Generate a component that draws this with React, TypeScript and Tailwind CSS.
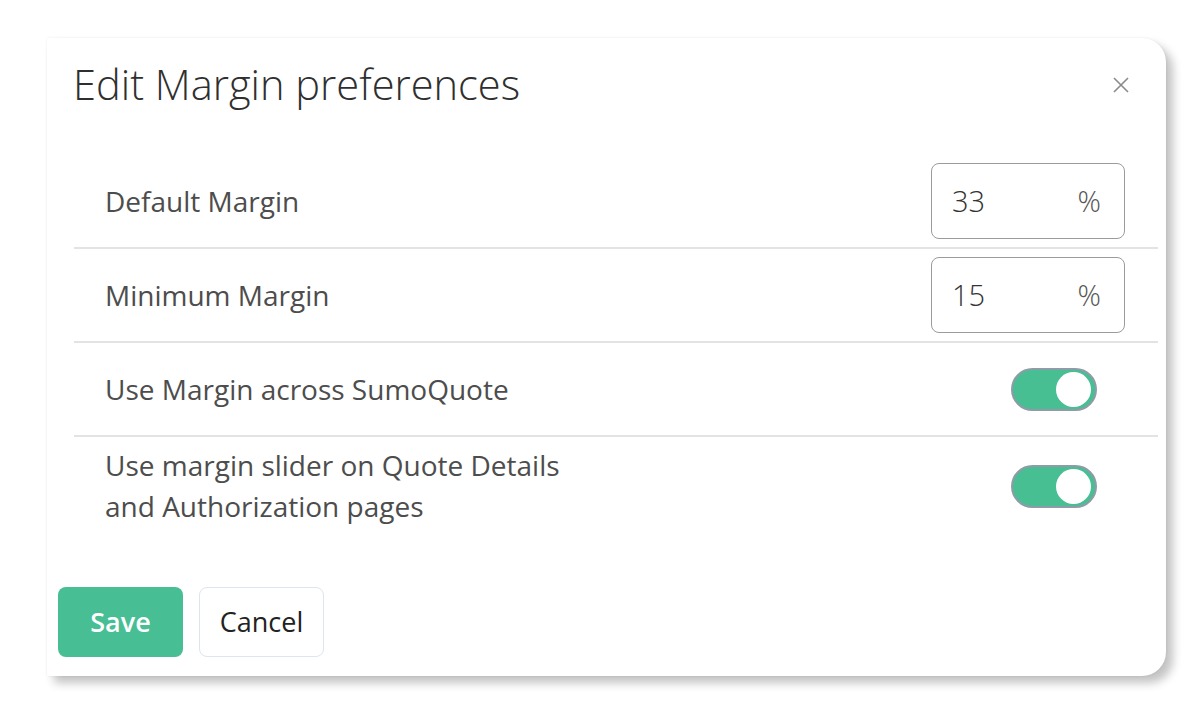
import React from "react";

function Toggle() {
  return (
    <div className="flex h-[43px] w-[86px] items-center justify-end rounded-full border-2 border-[#8e9ba8] bg-[#48be93] pr-[4px]">
      <div className="h-[35px] w-[35px] rounded-full bg-white" />
    </div>
  );
}

function PctInput({ value }: { value: string }) {
  return (
    <div className="flex h-[76px] w-[194px] items-center justify-between rounded-[8px] border-[1.5px] border-[#9b9b9b] pl-[20px] pr-[23px] text-[29px] font-light text-[#333]">
      <span>{value}</span>
      <span className="text-[#555]">%</span>
    </div>
  );
}

export default function App() {
  return (
    <div
      className="min-h-[711px] w-full bg-white pl-[47px] pt-[38px]"
      style={{ fontFamily: '"Open Sans", "Noto Sans", sans-serif' }}
    >
      <div className="flex h-[638px] w-[1119px] flex-col rounded-r-[24px] bg-white pt-[19px] shadow-[7px_7px_10px_rgba(0,0,0,0.24),0_0_3px_rgba(0,0,0,0.07)]">
        <div className="flex items-start justify-between pl-[26px] pr-[36px]">
          <h1 className="text-[41.6px] leading-[54px] font-light text-[#2f2f2f]">
            Edit Margin preferences
          </h1>
          <button className="mt-[19px] flex h-[18px] w-[18px] items-center justify-center">
            <svg width="18" height="18" viewBox="0 0 18 18">
              <path d="M2 2 L16 16 M16 2 L2 16" stroke="#8a8a8a" strokeWidth="1.6" fill="none" />
            </svg>
          </button>
        </div>

        <div className="mt-[44px] ml-[27px] mr-[8px] flex flex-col text-[28px] text-[#4d4d4d]">
          <div className="flex min-h-[92px] items-center justify-between border-b-2 border-[#e3e3e3] py-[8px] pl-[31px] pr-[33px]">
            <span>Default Margin</span>
            <PctInput value="33" />
          </div>
          <div className="flex min-h-[92px] items-center justify-between border-b-2 border-[#e3e3e3] py-[8px] pl-[31px] pr-[33px]">
            <span>Minimum Margin</span>
            <PctInput value="15" />
          </div>
          <div className="flex min-h-[94px] items-center justify-between border-b-2 border-[#e3e3e3] py-[8px] pl-[31px] pr-[61px]">
            <span>Use Margin across SumoQuote</span>
            <Toggle />
          </div>
          <div className="flex items-center justify-between py-[8px] pl-[31px] pr-[61px]">
            <span className="leading-[41px]">
              Use margin slider on Quote Details
              <br />
              and Authorization pages
            </span>
            <Toggle />
          </div>
        </div>

        <div className="mt-[52px] flex gap-[16px] pl-[11px]">
          <button className="flex h-[70px] w-[125px] items-center justify-center rounded-[8px] bg-[#47be93] text-[27px] font-semibold text-white">
            Save
          </button>
          <button className="flex h-[70px] w-[125px] items-center justify-center rounded-[8px] border-[1.5px] border-[#dde5ee] bg-white text-[27px] text-[#222]">
            Cancel
          </button>
        </div>
      </div>
    </div>
  );
}
